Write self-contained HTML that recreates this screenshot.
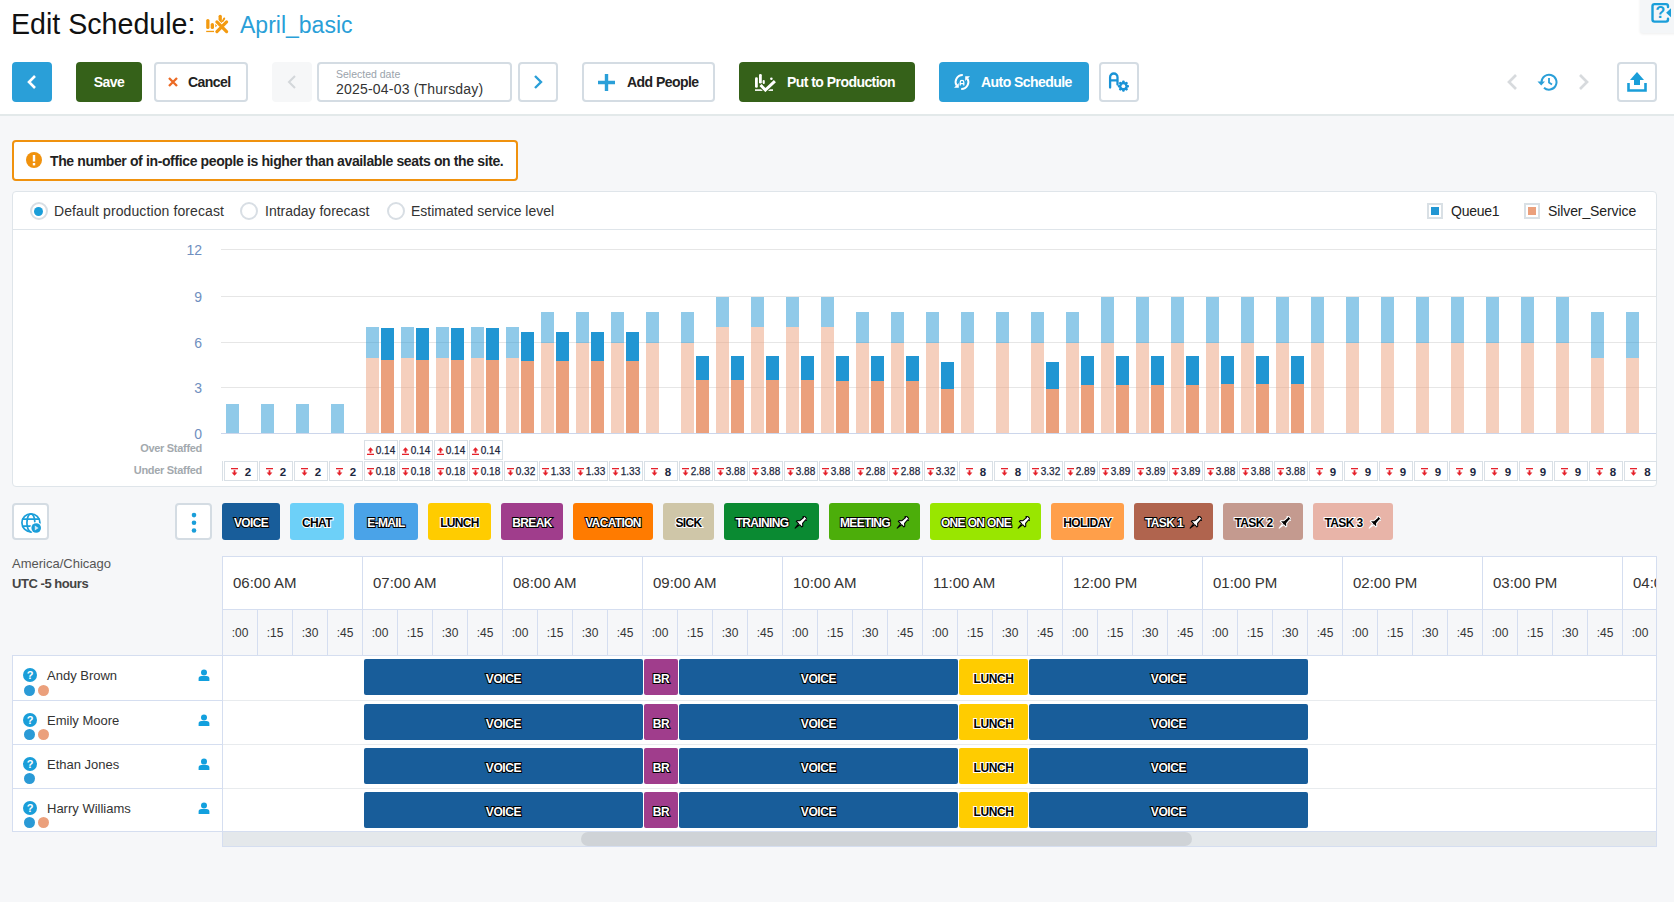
<!DOCTYPE html><html><head><meta charset="utf-8"><style>
*{box-sizing:border-box;margin:0;padding:0}
html,body{width:1674px;height:902px;overflow:hidden}
body{position:relative;background:#f6f7f9;font-family:"Liberation Sans",sans-serif;color:#222}
.abs{position:absolute}
.btn{position:absolute;border-radius:4px;display:flex;align-items:center;justify-content:center;font-weight:bold;font-size:14px;letter-spacing:-0.55px}
.obtn{background:#fff;border:2px solid #d4dce3}
.chip{position:absolute;top:503px;height:37px;border-radius:3px;display:flex;align-items:center;justify-content:center;font-weight:bold;font-size:12px;letter-spacing:-0.65px;padding-top:3px}
.w{color:#fff;-webkit-text-stroke:2px #000;paint-order:stroke fill}
.k{color:#000;-webkit-text-stroke:2px #fff;paint-order:stroke fill}
.bar{position:absolute;width:13px}
.sbox{position:absolute;width:34px;height:20px;border:1px solid #d9e0e6;background:#fff;font-size:10px;color:#1d2740;display:flex;align-items:center;justify-content:center;white-space:nowrap;padding-top:1px}
.ylab{position:absolute;right:1472px;font-size:13px;color:#6f8fc0;text-align:right}
.q{position:absolute;top:609px;height:46px;width:35px;border-right:1px solid #dde3ea;font-size:12px;color:#333;display:flex;align-items:center;justify-content:center}
.hr{position:absolute;top:557px;height:52px;width:140px;border-right:1px solid #d5def0;font-size:15px;color:#333;padding-left:11px;display:flex;align-items:center}
.row{position:absolute;left:12px;width:1644px;background:#fff}
.act{position:absolute;height:36px;border-radius:2px;display:flex;align-items:center;justify-content:center;font-weight:bold;font-size:12px;letter-spacing:-0.4px;padding-top:3px}
</style></head><body>

<div class="abs" style="left:0;top:0;width:1674px;height:114px;background:#fff"></div>
<div class="abs" style="left:0;top:114px;width:1674px;height:2px;background:#e3e9ea"></div>
<div class="abs" style="left:11px;top:5.5px;font-size:28.6px;line-height:36px;color:#111;white-space:nowrap">Edit Schedule:</div>
<svg class="abs" style="left:205px;top:14px" width="25" height="20" viewBox="0 0 25 20">
<g fill="#f39a10"><rect x="1.2" y="5" width="3.3" height="10" rx="1.6"/><rect x="5.7" y="9" width="3.3" height="6" rx="1.6"/><rect x="1.2" y="16.8" width="7.8" height="1.3"/><path d="M10.3 9.8 L12.5 11.5 L10.3 13.2Z"/></g>
<path d="M15.2 2.3 V8.5" stroke="#f39a10" stroke-width="3.3" stroke-linecap="round"/><path d="M19.2 4.5 L17.8 7.2" stroke="#f39a10" stroke-width="2" stroke-linecap="round"/>
<path d="M11.9 7.9 L21.6 17.6 M21.6 7.9 L11.9 17.6" stroke="#fff" stroke-width="5" stroke-linecap="round"/>
<path d="M11.9 7.9 L21.6 17.6 M21.6 7.9 L11.9 17.6" stroke="#f39a10" stroke-width="3.2" stroke-linecap="round"/></svg>
<div class="abs" style="left:240px;top:10px;font-size:23px;line-height:30px;color:#2a9fd8;white-space:nowrap">April_basic</div>
<div class="btn" style="left:12px;top:62px;width:40px;height:40px;background:#2a9fd8"><svg width="12" height="16" viewBox="0 0 12 16"><path d="M9 2 L3 8 L9 14" stroke="#fff" stroke-width="2.6" fill="none"/></svg></div>
<div class="btn" style="left:76px;top:62px;width:66px;height:40px;background:#356119;color:#fff">Save</div>
<div class="btn obtn" style="left:154px;top:62px;width:94px;height:40px;color:#222;justify-content:flex-start;padding-left:12px"><svg width="10" height="10" viewBox="0 0 10 10" style="margin-right:10px"><path d="M1 1 L9 9 M9 1 L1 9" stroke="#ec6a24" stroke-width="2.3"/></svg>Cancel</div>
<div class="btn" style="left:272px;top:62px;width:40px;height:40px;background:#f6f7f8"><svg width="12" height="16" viewBox="0 0 12 16"><path d="M9 2 L3 8 L9 14" stroke="#d3d7da" stroke-width="2" fill="none"/></svg></div>
<div class="btn obtn" style="left:317px;top:62px;width:195px;height:40px;display:block;padding-left:17px;letter-spacing:0"><div style="font-size:10.5px;color:#9aa3ab;font-weight:normal;line-height:12px;margin-top:4px">Selected date</div><div style="font-size:14px;color:#333;font-weight:normal;line-height:16px;margin-top:1px;letter-spacing:0.2px">2025-04-03 (Thursday)</div></div>
<div class="btn obtn" style="left:518px;top:62px;width:40px;height:40px"><svg width="12" height="16" viewBox="0 0 12 16"><path d="M3 2 L9 8 L3 14" stroke="#2a9fd8" stroke-width="2.4" fill="none"/></svg></div>
<div class="btn obtn" style="left:582px;top:62px;width:133px;height:40px;color:#222;justify-content:flex-start;padding-left:14px"><svg width="17" height="17" viewBox="0 0 17 17" style="margin-right:12px"><path d="M8.5 0 V17 M0 8.5 H17" stroke="#2a9fd8" stroke-width="3.4"/></svg>Add People</div>
<div class="btn" style="left:739px;top:62px;width:176px;height:40px;background:#356119;color:#fff;justify-content:flex-start;padding-left:15px"><svg width="22" height="19" viewBox="0 0 22 19" style="margin-right:11px;margin-top:1px">
<g fill="#fff"><rect x="1" y="4.2" width="2.8" height="10.5" rx="1.3"/><rect x="5" y="1" width="2.8" height="9.5" rx="1.3"/><rect x="8.6" y="7" width="2.2" height="4" rx="1"/><circle cx="17.4" cy="5.8" r="1.3"/><rect x="1" y="16.3" width="18" height="1.6"/></g>
<path d="M6.5 12 L11.4 17 L20.9 8.1" stroke="#356119" stroke-width="5" fill="none"/><path d="M6.5 12 L11.4 17 L20.9 8.1" stroke="#fff" stroke-width="3" fill="none"/></svg>Put to Production</div>
<div class="btn" style="left:939px;top:62px;width:150px;height:40px;background:#2a9fd8;color:#fff;justify-content:flex-start;padding-left:14px"><svg width="18" height="18" viewBox="0 0 18 18" style="margin-right:10px">
<path d="M9.8 2 A7 7 0 0 0 3.6 12.6" stroke="#fff" stroke-width="1.9" fill="none"/><path d="M8.2 16 A7 7 0 0 0 14.4 5.4" stroke="#fff" stroke-width="1.9" fill="none"/>
<path d="M5.8 14.8 L1 14.8 L5.8 10 Z M12.2 3.2 L17 3.2 L12.2 8 Z" fill="#fff"/><path d="M7.2 12.5 V9.2 A1.8 1.8 0 0 1 10.8 9.2 V12.5 M7.2 10.6 H10.8" stroke="#fff" stroke-width="1.3" fill="none"/></svg>Auto Schedule</div>
<div class="btn obtn" style="left:1099px;top:62px;width:40px;height:40px"><svg width="22" height="22" viewBox="0 0 22 22">
<path d="M2.1 16.6 V6.2 A3.7 3.7 0 0 1 9.5 6.2 V13.5 M2.1 9.3 H9.5" stroke="#1a93d6" stroke-width="2.3" fill="none" stroke-linecap="round"/>
<g fill="#1a93d6"><rect x="14.1" y="9.6" width="2.6" height="11.2" rx="1" transform="rotate(0 15.4 15.2)"/><rect x="14.1" y="9.6" width="2.6" height="11.2" rx="1" transform="rotate(45 15.4 15.2)"/><rect x="14.1" y="9.6" width="2.6" height="11.2" rx="1" transform="rotate(90 15.4 15.2)"/><rect x="14.1" y="9.6" width="2.6" height="11.2" rx="1" transform="rotate(135 15.4 15.2)"/><circle cx="15.4" cy="15.2" r="4.3"/></g><circle cx="15.4" cy="15.2" r="1.9" fill="#fff"/></svg></div>
<svg class="abs" style="left:1505px;top:72px" width="14" height="20" viewBox="0 0 14 20"><path d="M11 3 L4 10 L11 17" stroke="#d7dadd" stroke-width="2.7" fill="none"/></svg>
<svg class="abs" style="left:1536px;top:71px" width="22" height="22" viewBox="0 0 22 22"><path d="M5.5 11 A7.5 7.5 0 1 1 8 16.8" stroke="#2a9fd8" stroke-width="2" fill="none"/>
<path d="M1.5 10.5 H9 L5.2 14.5 Z" fill="#2a9fd8"/><path d="M13 7 V11.5 L16 13.5" stroke="#2a9fd8" stroke-width="1.8" fill="none"/></svg>
<svg class="abs" style="left:1577px;top:72px" width="14" height="20" viewBox="0 0 14 20"><path d="M3 3 L10 10 L3 17" stroke="#d7dadd" stroke-width="2.7" fill="none"/></svg>
<div class="btn obtn" style="left:1617px;top:62px;width:40px;height:40px"><svg width="22" height="22" viewBox="0 0 22 22">
<path d="M11 1 L18 9 H14 V14 H8 V9 H4 Z" fill="#1a9ed9"/><path d="M2.5 12 V19.5 H19.5 V12" stroke="#1a9ed9" stroke-width="2.6" fill="none"/></svg></div>
<div class="abs" style="left:1640px;top:-4px;width:40px;height:37px;background:#f4f6f8;border-radius:0 0 0 3px;box-shadow:0 1px 3px rgba(0,0,0,0.07)"></div>
<svg class="abs" style="left:1650px;top:0px" width="24" height="24" viewBox="0 0 24 24"><path d="M18 7 V6.1 Q18 4.1 16 4.1 H4.5 Q2.5 4.1 2.5 6.1 V19.6 Q2.5 21.6 4.5 21.6 H16 Q18 21.6 18 19.6 V18.6" stroke="#1a9ed9" stroke-width="2.4" fill="none" stroke-linecap="round"/>
<path d="M16.1 12.75 L21 8.2 V17.3 Z" fill="#1a9ed9"/><text x="10.4" y="18.2" font-size="16" font-weight="bold" fill="#1a9ed9" text-anchor="middle" font-family="Liberation Sans">?</text></svg>
<div class="abs" style="left:12px;top:140px;width:506px;height:41px;background:#fff;border:2px solid #f0920e;border-radius:4px"></div>
<svg class="abs" style="left:26px;top:152px" width="16" height="16" viewBox="0 0 16 16"><circle cx="8" cy="8" r="8" fill="#f0920e"/><rect x="6.8" y="3" width="2.4" height="6.5" fill="#fff"/><rect x="6.8" y="11" width="2.4" height="2.4" fill="#fff"/></svg>
<div class="abs" style="left:50px;top:152px;font-size:14px;line-height:18px;font-weight:bold;color:#222;white-space:nowrap;letter-spacing:-0.37px">The number of in-office people is higher than available seats on the site.</div>
<div class="abs" style="left:12px;top:191px;width:1645px;height:296px;background:#fff;border:1px solid #dfe5ea;border-radius:4px"></div>
<div class="abs" style="left:12px;top:229px;width:1645px;height:1px;background:#dfe5ea"></div>
<div class="abs" style="left:29.5px;top:202px;width:18px;height:18px;border-radius:50%;border:2px solid #d8dee4;background:#fff"></div><div class="abs" style="left:34.0px;top:206.5px;width:9px;height:9px;border-radius:50%;background:#1a9ed9"></div>
<div class="abs" style="left:240px;top:202px;width:18px;height:18px;border-radius:50%;border:2px solid #d8dee4;background:#fff"></div>
<div class="abs" style="left:387px;top:202px;width:18px;height:18px;border-radius:50%;border:2px solid #d8dee4;background:#fff"></div>
<div class="abs" style="left:54px;top:203px;font-size:14px;line-height:17px;color:#333;white-space:nowrap;letter-spacing:0.1px">Default production forecast</div>
<div class="abs" style="left:265px;top:203px;font-size:14px;line-height:17px;color:#333;white-space:nowrap">Intraday forecast</div>
<div class="abs" style="left:411px;top:203px;font-size:14px;line-height:17px;color:#333;white-space:nowrap">Estimated service level</div>
<div class="abs" style="left:1427px;top:203px;width:16px;height:16px;border:2px solid #d9e0e5;background:#fff"></div><div class="abs" style="left:1431px;top:207px;width:8px;height:8px;background:#2196d3"></div>
<div class="abs" style="left:1524px;top:203px;width:16px;height:16px;border:2px solid #d9e0e5;background:#fff"></div><div class="abs" style="left:1528px;top:207px;width:8px;height:8px;background:#eba07c"></div>
<div class="abs" style="left:1451px;top:203px;font-size:14px;line-height:17px;color:#222;white-space:nowrap;letter-spacing:-0.25px">Queue1</div>
<div class="abs" style="left:1548px;top:203px;font-size:14px;line-height:17px;color:#222;white-space:nowrap;letter-spacing:-0.1px">Silver_Service</div>
<div class="abs" style="left:221px;top:387px;width:1435px;height:1px;background:#e6e6e6"></div>
<div class="abs" style="left:221px;top:342px;width:1435px;height:1px;background:#e6e6e6"></div>
<div class="abs" style="left:221px;top:296px;width:1435px;height:1px;background:#e6e6e6"></div>
<div class="abs" style="left:221px;top:249px;width:1435px;height:1px;background:#e6e6e6"></div>
<div class="abs" style="left:150px;top:425px;width:52px;text-align:right;font-size:14px;line-height:18px;color:#6f8fc0">0</div>
<div class="abs" style="left:150px;top:379px;width:52px;text-align:right;font-size:14px;line-height:18px;color:#6f8fc0">3</div>
<div class="abs" style="left:150px;top:334px;width:52px;text-align:right;font-size:14px;line-height:18px;color:#6f8fc0">6</div>
<div class="abs" style="left:150px;top:288px;width:52px;text-align:right;font-size:14px;line-height:18px;color:#6f8fc0">9</div>
<div class="abs" style="left:150px;top:241px;width:52px;text-align:right;font-size:14px;line-height:18px;color:#6f8fc0">12</div>
<div class="bar" style="left:226px;top:404px;height:30px;background:rgba(33,150,211,0.5)"></div>
<div class="bar" style="left:261px;top:404px;height:30px;background:rgba(33,150,211,0.5)"></div>
<div class="bar" style="left:296px;top:404px;height:30px;background:rgba(33,150,211,0.5)"></div>
<div class="bar" style="left:331px;top:404px;height:30px;background:rgba(33,150,211,0.5)"></div>
<div class="bar" style="left:366px;top:358px;height:76px;background:rgba(235,160,124,0.5)"></div><div class="bar" style="left:366px;top:327px;height:31px;background:rgba(33,150,211,0.5)"></div>
<div class="bar" style="left:381px;top:360px;height:74px;background:#eba07c"></div><div class="bar" style="left:381px;top:328px;height:32px;background:#2196d3"></div>
<div class="bar" style="left:401px;top:358px;height:76px;background:rgba(235,160,124,0.5)"></div><div class="bar" style="left:401px;top:327px;height:31px;background:rgba(33,150,211,0.5)"></div>
<div class="bar" style="left:416px;top:360px;height:74px;background:#eba07c"></div><div class="bar" style="left:416px;top:328px;height:32px;background:#2196d3"></div>
<div class="bar" style="left:436px;top:358px;height:76px;background:rgba(235,160,124,0.5)"></div><div class="bar" style="left:436px;top:327px;height:31px;background:rgba(33,150,211,0.5)"></div>
<div class="bar" style="left:451px;top:360px;height:74px;background:#eba07c"></div><div class="bar" style="left:451px;top:328px;height:32px;background:#2196d3"></div>
<div class="bar" style="left:471px;top:358px;height:76px;background:rgba(235,160,124,0.5)"></div><div class="bar" style="left:471px;top:327px;height:31px;background:rgba(33,150,211,0.5)"></div>
<div class="bar" style="left:486px;top:360px;height:74px;background:#eba07c"></div><div class="bar" style="left:486px;top:328px;height:32px;background:#2196d3"></div>
<div class="bar" style="left:506px;top:358px;height:76px;background:rgba(235,160,124,0.5)"></div><div class="bar" style="left:506px;top:327px;height:31px;background:rgba(33,150,211,0.5)"></div>
<div class="bar" style="left:521px;top:361px;height:73px;background:#eba07c"></div><div class="bar" style="left:521px;top:332px;height:29px;background:#2196d3"></div>
<div class="bar" style="left:541px;top:343px;height:91px;background:rgba(235,160,124,0.5)"></div><div class="bar" style="left:541px;top:312px;height:31px;background:rgba(33,150,211,0.5)"></div>
<div class="bar" style="left:556px;top:361px;height:73px;background:#eba07c"></div><div class="bar" style="left:556px;top:332px;height:29px;background:#2196d3"></div>
<div class="bar" style="left:576px;top:343px;height:91px;background:rgba(235,160,124,0.5)"></div><div class="bar" style="left:576px;top:312px;height:31px;background:rgba(33,150,211,0.5)"></div>
<div class="bar" style="left:591px;top:361px;height:73px;background:#eba07c"></div><div class="bar" style="left:591px;top:332px;height:29px;background:#2196d3"></div>
<div class="bar" style="left:611px;top:343px;height:91px;background:rgba(235,160,124,0.5)"></div><div class="bar" style="left:611px;top:312px;height:31px;background:rgba(33,150,211,0.5)"></div>
<div class="bar" style="left:626px;top:361px;height:73px;background:#eba07c"></div><div class="bar" style="left:626px;top:332px;height:29px;background:#2196d3"></div>
<div class="bar" style="left:646px;top:343px;height:91px;background:rgba(235,160,124,0.5)"></div><div class="bar" style="left:646px;top:312px;height:31px;background:rgba(33,150,211,0.5)"></div>
<div class="bar" style="left:681px;top:343px;height:91px;background:rgba(235,160,124,0.5)"></div><div class="bar" style="left:681px;top:312px;height:31px;background:rgba(33,150,211,0.5)"></div>
<div class="bar" style="left:696px;top:380px;height:54px;background:#eba07c"></div><div class="bar" style="left:696px;top:356px;height:24px;background:#2196d3"></div>
<div class="bar" style="left:716px;top:327px;height:107px;background:rgba(235,160,124,0.5)"></div><div class="bar" style="left:716px;top:297px;height:30px;background:rgba(33,150,211,0.5)"></div>
<div class="bar" style="left:731px;top:380px;height:54px;background:#eba07c"></div><div class="bar" style="left:731px;top:356px;height:24px;background:#2196d3"></div>
<div class="bar" style="left:751px;top:327px;height:107px;background:rgba(235,160,124,0.5)"></div><div class="bar" style="left:751px;top:297px;height:30px;background:rgba(33,150,211,0.5)"></div>
<div class="bar" style="left:766px;top:380px;height:54px;background:#eba07c"></div><div class="bar" style="left:766px;top:356px;height:24px;background:#2196d3"></div>
<div class="bar" style="left:786px;top:327px;height:107px;background:rgba(235,160,124,0.5)"></div><div class="bar" style="left:786px;top:297px;height:30px;background:rgba(33,150,211,0.5)"></div>
<div class="bar" style="left:801px;top:380px;height:54px;background:#eba07c"></div><div class="bar" style="left:801px;top:356px;height:24px;background:#2196d3"></div>
<div class="bar" style="left:821px;top:327px;height:107px;background:rgba(235,160,124,0.5)"></div><div class="bar" style="left:821px;top:297px;height:30px;background:rgba(33,150,211,0.5)"></div>
<div class="bar" style="left:836px;top:381px;height:53px;background:#eba07c"></div><div class="bar" style="left:836px;top:356px;height:25px;background:#2196d3"></div>
<div class="bar" style="left:856px;top:343px;height:91px;background:rgba(235,160,124,0.5)"></div><div class="bar" style="left:856px;top:312px;height:31px;background:rgba(33,150,211,0.5)"></div>
<div class="bar" style="left:871px;top:381px;height:53px;background:#eba07c"></div><div class="bar" style="left:871px;top:356px;height:25px;background:#2196d3"></div>
<div class="bar" style="left:891px;top:343px;height:91px;background:rgba(235,160,124,0.5)"></div><div class="bar" style="left:891px;top:312px;height:31px;background:rgba(33,150,211,0.5)"></div>
<div class="bar" style="left:906px;top:381px;height:53px;background:#eba07c"></div><div class="bar" style="left:906px;top:356px;height:25px;background:#2196d3"></div>
<div class="bar" style="left:926px;top:343px;height:91px;background:rgba(235,160,124,0.5)"></div><div class="bar" style="left:926px;top:312px;height:31px;background:rgba(33,150,211,0.5)"></div>
<div class="bar" style="left:941px;top:389px;height:45px;background:#eba07c"></div><div class="bar" style="left:941px;top:362px;height:27px;background:#2196d3"></div>
<div class="bar" style="left:961px;top:343px;height:91px;background:rgba(235,160,124,0.5)"></div><div class="bar" style="left:961px;top:312px;height:31px;background:rgba(33,150,211,0.5)"></div>
<div class="bar" style="left:996px;top:343px;height:91px;background:rgba(235,160,124,0.5)"></div><div class="bar" style="left:996px;top:312px;height:31px;background:rgba(33,150,211,0.5)"></div>
<div class="bar" style="left:1031px;top:343px;height:91px;background:rgba(235,160,124,0.5)"></div><div class="bar" style="left:1031px;top:312px;height:31px;background:rgba(33,150,211,0.5)"></div>
<div class="bar" style="left:1046px;top:389px;height:45px;background:#eba07c"></div><div class="bar" style="left:1046px;top:362px;height:27px;background:#2196d3"></div>
<div class="bar" style="left:1066px;top:343px;height:91px;background:rgba(235,160,124,0.5)"></div><div class="bar" style="left:1066px;top:312px;height:31px;background:rgba(33,150,211,0.5)"></div>
<div class="bar" style="left:1081px;top:385px;height:49px;background:#eba07c"></div><div class="bar" style="left:1081px;top:356px;height:29px;background:#2196d3"></div>
<div class="bar" style="left:1101px;top:343px;height:91px;background:rgba(235,160,124,0.5)"></div><div class="bar" style="left:1101px;top:297px;height:46px;background:rgba(33,150,211,0.5)"></div>
<div class="bar" style="left:1116px;top:385px;height:49px;background:#eba07c"></div><div class="bar" style="left:1116px;top:356px;height:29px;background:#2196d3"></div>
<div class="bar" style="left:1136px;top:343px;height:91px;background:rgba(235,160,124,0.5)"></div><div class="bar" style="left:1136px;top:297px;height:46px;background:rgba(33,150,211,0.5)"></div>
<div class="bar" style="left:1151px;top:385px;height:49px;background:#eba07c"></div><div class="bar" style="left:1151px;top:356px;height:29px;background:#2196d3"></div>
<div class="bar" style="left:1171px;top:343px;height:91px;background:rgba(235,160,124,0.5)"></div><div class="bar" style="left:1171px;top:297px;height:46px;background:rgba(33,150,211,0.5)"></div>
<div class="bar" style="left:1186px;top:385px;height:49px;background:#eba07c"></div><div class="bar" style="left:1186px;top:356px;height:29px;background:#2196d3"></div>
<div class="bar" style="left:1206px;top:343px;height:91px;background:rgba(235,160,124,0.5)"></div><div class="bar" style="left:1206px;top:297px;height:46px;background:rgba(33,150,211,0.5)"></div>
<div class="bar" style="left:1221px;top:384px;height:50px;background:#eba07c"></div><div class="bar" style="left:1221px;top:356px;height:28px;background:#2196d3"></div>
<div class="bar" style="left:1241px;top:343px;height:91px;background:rgba(235,160,124,0.5)"></div><div class="bar" style="left:1241px;top:297px;height:46px;background:rgba(33,150,211,0.5)"></div>
<div class="bar" style="left:1256px;top:384px;height:50px;background:#eba07c"></div><div class="bar" style="left:1256px;top:356px;height:28px;background:#2196d3"></div>
<div class="bar" style="left:1276px;top:343px;height:91px;background:rgba(235,160,124,0.5)"></div><div class="bar" style="left:1276px;top:297px;height:46px;background:rgba(33,150,211,0.5)"></div>
<div class="bar" style="left:1291px;top:384px;height:50px;background:#eba07c"></div><div class="bar" style="left:1291px;top:356px;height:28px;background:#2196d3"></div>
<div class="bar" style="left:1311px;top:343px;height:91px;background:rgba(235,160,124,0.5)"></div><div class="bar" style="left:1311px;top:297px;height:46px;background:rgba(33,150,211,0.5)"></div>
<div class="bar" style="left:1346px;top:343px;height:91px;background:rgba(235,160,124,0.5)"></div><div class="bar" style="left:1346px;top:297px;height:46px;background:rgba(33,150,211,0.5)"></div>
<div class="bar" style="left:1381px;top:343px;height:91px;background:rgba(235,160,124,0.5)"></div><div class="bar" style="left:1381px;top:297px;height:46px;background:rgba(33,150,211,0.5)"></div>
<div class="bar" style="left:1416px;top:343px;height:91px;background:rgba(235,160,124,0.5)"></div><div class="bar" style="left:1416px;top:297px;height:46px;background:rgba(33,150,211,0.5)"></div>
<div class="bar" style="left:1451px;top:343px;height:91px;background:rgba(235,160,124,0.5)"></div><div class="bar" style="left:1451px;top:297px;height:46px;background:rgba(33,150,211,0.5)"></div>
<div class="bar" style="left:1486px;top:343px;height:91px;background:rgba(235,160,124,0.5)"></div><div class="bar" style="left:1486px;top:297px;height:46px;background:rgba(33,150,211,0.5)"></div>
<div class="bar" style="left:1521px;top:343px;height:91px;background:rgba(235,160,124,0.5)"></div><div class="bar" style="left:1521px;top:297px;height:46px;background:rgba(33,150,211,0.5)"></div>
<div class="bar" style="left:1556px;top:343px;height:91px;background:rgba(235,160,124,0.5)"></div><div class="bar" style="left:1556px;top:297px;height:46px;background:rgba(33,150,211,0.5)"></div>
<div class="bar" style="left:1591px;top:358px;height:76px;background:rgba(235,160,124,0.5)"></div><div class="bar" style="left:1591px;top:312px;height:46px;background:rgba(33,150,211,0.5)"></div>
<div class="bar" style="left:1626px;top:358px;height:76px;background:rgba(235,160,124,0.5)"></div><div class="bar" style="left:1626px;top:312px;height:46px;background:rgba(33,150,211,0.5)"></div>
<div class="abs" style="left:221px;top:433px;width:1435px;height:1px;background:#ccd6eb"></div>
<div class="abs" style="left:100px;top:441px;width:102px;text-align:right;font-size:11px;line-height:14px;color:#a3a9ae;font-weight:bold;letter-spacing:-0.3px">Over Staffed</div>
<div class="abs" style="left:100px;top:463px;width:102px;text-align:right;font-size:11px;line-height:14px;color:#a3a9ae;font-weight:bold;letter-spacing:-0.3px">Under Staffed</div>
<div class="abs" style="left:222px;top:461px;width:1px;height:20px;background:#d9e0e6"></div>
<div class="sbox" style="left:224px;top:461px;"><svg width="7" height="8" viewBox="0 0 7 8"><rect x="0" y="0" width="7" height="1.3" fill="#e5222b"/><rect x="2.6" y="2.2" width="1.8" height="3" fill="#e5222b"/><path d="M0.6 4.4 L3.5 7.8 L6.4 4.4 Z" fill="#e5222b"/></svg><span style="margin-left:7px;font-size:11.5px;font-weight:bold;color:#1d2740">2</span></div>
<div class="sbox" style="left:259px;top:461px;"><svg width="7" height="8" viewBox="0 0 7 8"><rect x="0" y="0" width="7" height="1.3" fill="#e5222b"/><rect x="2.6" y="2.2" width="1.8" height="3" fill="#e5222b"/><path d="M0.6 4.4 L3.5 7.8 L6.4 4.4 Z" fill="#e5222b"/></svg><span style="margin-left:7px;font-size:11.5px;font-weight:bold;color:#1d2740">2</span></div>
<div class="sbox" style="left:294px;top:461px;"><svg width="7" height="8" viewBox="0 0 7 8"><rect x="0" y="0" width="7" height="1.3" fill="#e5222b"/><rect x="2.6" y="2.2" width="1.8" height="3" fill="#e5222b"/><path d="M0.6 4.4 L3.5 7.8 L6.4 4.4 Z" fill="#e5222b"/></svg><span style="margin-left:7px;font-size:11.5px;font-weight:bold;color:#1d2740">2</span></div>
<div class="sbox" style="left:329px;top:461px;"><svg width="7" height="8" viewBox="0 0 7 8"><rect x="0" y="0" width="7" height="1.3" fill="#e5222b"/><rect x="2.6" y="2.2" width="1.8" height="3" fill="#e5222b"/><path d="M0.6 4.4 L3.5 7.8 L6.4 4.4 Z" fill="#e5222b"/></svg><span style="margin-left:7px;font-size:11.5px;font-weight:bold;color:#1d2740">2</span></div>
<div class="sbox" style="left:364px;top:461px;"><svg width="7" height="8" viewBox="0 0 7 8"><rect x="0" y="0" width="7" height="1.3" fill="#e5222b"/><rect x="2.6" y="2.2" width="1.8" height="3" fill="#e5222b"/><path d="M0.6 4.4 L3.5 7.8 L6.4 4.4 Z" fill="#e5222b"/></svg><span style="margin-left:2px;-webkit-text-stroke:0.25px #1d2740">0.18</span></div>
<div class="sbox" style="left:399px;top:461px;"><svg width="7" height="8" viewBox="0 0 7 8"><rect x="0" y="0" width="7" height="1.3" fill="#e5222b"/><rect x="2.6" y="2.2" width="1.8" height="3" fill="#e5222b"/><path d="M0.6 4.4 L3.5 7.8 L6.4 4.4 Z" fill="#e5222b"/></svg><span style="margin-left:2px;-webkit-text-stroke:0.25px #1d2740">0.18</span></div>
<div class="sbox" style="left:434px;top:461px;"><svg width="7" height="8" viewBox="0 0 7 8"><rect x="0" y="0" width="7" height="1.3" fill="#e5222b"/><rect x="2.6" y="2.2" width="1.8" height="3" fill="#e5222b"/><path d="M0.6 4.4 L3.5 7.8 L6.4 4.4 Z" fill="#e5222b"/></svg><span style="margin-left:2px;-webkit-text-stroke:0.25px #1d2740">0.18</span></div>
<div class="sbox" style="left:469px;top:461px;"><svg width="7" height="8" viewBox="0 0 7 8"><rect x="0" y="0" width="7" height="1.3" fill="#e5222b"/><rect x="2.6" y="2.2" width="1.8" height="3" fill="#e5222b"/><path d="M0.6 4.4 L3.5 7.8 L6.4 4.4 Z" fill="#e5222b"/></svg><span style="margin-left:2px;-webkit-text-stroke:0.25px #1d2740">0.18</span></div>
<div class="sbox" style="left:504px;top:461px;"><svg width="7" height="8" viewBox="0 0 7 8"><rect x="0" y="0" width="7" height="1.3" fill="#e5222b"/><rect x="2.6" y="2.2" width="1.8" height="3" fill="#e5222b"/><path d="M0.6 4.4 L3.5 7.8 L6.4 4.4 Z" fill="#e5222b"/></svg><span style="margin-left:2px;-webkit-text-stroke:0.25px #1d2740">0.32</span></div>
<div class="sbox" style="left:539px;top:461px;"><svg width="7" height="8" viewBox="0 0 7 8"><rect x="0" y="0" width="7" height="1.3" fill="#e5222b"/><rect x="2.6" y="2.2" width="1.8" height="3" fill="#e5222b"/><path d="M0.6 4.4 L3.5 7.8 L6.4 4.4 Z" fill="#e5222b"/></svg><span style="margin-left:2px;-webkit-text-stroke:0.25px #1d2740">1.33</span></div>
<div class="sbox" style="left:574px;top:461px;"><svg width="7" height="8" viewBox="0 0 7 8"><rect x="0" y="0" width="7" height="1.3" fill="#e5222b"/><rect x="2.6" y="2.2" width="1.8" height="3" fill="#e5222b"/><path d="M0.6 4.4 L3.5 7.8 L6.4 4.4 Z" fill="#e5222b"/></svg><span style="margin-left:2px;-webkit-text-stroke:0.25px #1d2740">1.33</span></div>
<div class="sbox" style="left:609px;top:461px;"><svg width="7" height="8" viewBox="0 0 7 8"><rect x="0" y="0" width="7" height="1.3" fill="#e5222b"/><rect x="2.6" y="2.2" width="1.8" height="3" fill="#e5222b"/><path d="M0.6 4.4 L3.5 7.8 L6.4 4.4 Z" fill="#e5222b"/></svg><span style="margin-left:2px;-webkit-text-stroke:0.25px #1d2740">1.33</span></div>
<div class="sbox" style="left:644px;top:461px;"><svg width="7" height="8" viewBox="0 0 7 8"><rect x="0" y="0" width="7" height="1.3" fill="#e5222b"/><rect x="2.6" y="2.2" width="1.8" height="3" fill="#e5222b"/><path d="M0.6 4.4 L3.5 7.8 L6.4 4.4 Z" fill="#e5222b"/></svg><span style="margin-left:7px;font-size:11.5px;font-weight:bold;color:#1d2740">8</span></div>
<div class="sbox" style="left:679px;top:461px;"><svg width="7" height="8" viewBox="0 0 7 8"><rect x="0" y="0" width="7" height="1.3" fill="#e5222b"/><rect x="2.6" y="2.2" width="1.8" height="3" fill="#e5222b"/><path d="M0.6 4.4 L3.5 7.8 L6.4 4.4 Z" fill="#e5222b"/></svg><span style="margin-left:2px;-webkit-text-stroke:0.25px #1d2740">2.88</span></div>
<div class="sbox" style="left:714px;top:461px;"><svg width="7" height="8" viewBox="0 0 7 8"><rect x="0" y="0" width="7" height="1.3" fill="#e5222b"/><rect x="2.6" y="2.2" width="1.8" height="3" fill="#e5222b"/><path d="M0.6 4.4 L3.5 7.8 L6.4 4.4 Z" fill="#e5222b"/></svg><span style="margin-left:2px;-webkit-text-stroke:0.25px #1d2740">3.88</span></div>
<div class="sbox" style="left:749px;top:461px;"><svg width="7" height="8" viewBox="0 0 7 8"><rect x="0" y="0" width="7" height="1.3" fill="#e5222b"/><rect x="2.6" y="2.2" width="1.8" height="3" fill="#e5222b"/><path d="M0.6 4.4 L3.5 7.8 L6.4 4.4 Z" fill="#e5222b"/></svg><span style="margin-left:2px;-webkit-text-stroke:0.25px #1d2740">3.88</span></div>
<div class="sbox" style="left:784px;top:461px;"><svg width="7" height="8" viewBox="0 0 7 8"><rect x="0" y="0" width="7" height="1.3" fill="#e5222b"/><rect x="2.6" y="2.2" width="1.8" height="3" fill="#e5222b"/><path d="M0.6 4.4 L3.5 7.8 L6.4 4.4 Z" fill="#e5222b"/></svg><span style="margin-left:2px;-webkit-text-stroke:0.25px #1d2740">3.88</span></div>
<div class="sbox" style="left:819px;top:461px;"><svg width="7" height="8" viewBox="0 0 7 8"><rect x="0" y="0" width="7" height="1.3" fill="#e5222b"/><rect x="2.6" y="2.2" width="1.8" height="3" fill="#e5222b"/><path d="M0.6 4.4 L3.5 7.8 L6.4 4.4 Z" fill="#e5222b"/></svg><span style="margin-left:2px;-webkit-text-stroke:0.25px #1d2740">3.88</span></div>
<div class="sbox" style="left:854px;top:461px;"><svg width="7" height="8" viewBox="0 0 7 8"><rect x="0" y="0" width="7" height="1.3" fill="#e5222b"/><rect x="2.6" y="2.2" width="1.8" height="3" fill="#e5222b"/><path d="M0.6 4.4 L3.5 7.8 L6.4 4.4 Z" fill="#e5222b"/></svg><span style="margin-left:2px;-webkit-text-stroke:0.25px #1d2740">2.88</span></div>
<div class="sbox" style="left:889px;top:461px;"><svg width="7" height="8" viewBox="0 0 7 8"><rect x="0" y="0" width="7" height="1.3" fill="#e5222b"/><rect x="2.6" y="2.2" width="1.8" height="3" fill="#e5222b"/><path d="M0.6 4.4 L3.5 7.8 L6.4 4.4 Z" fill="#e5222b"/></svg><span style="margin-left:2px;-webkit-text-stroke:0.25px #1d2740">2.88</span></div>
<div class="sbox" style="left:924px;top:461px;"><svg width="7" height="8" viewBox="0 0 7 8"><rect x="0" y="0" width="7" height="1.3" fill="#e5222b"/><rect x="2.6" y="2.2" width="1.8" height="3" fill="#e5222b"/><path d="M0.6 4.4 L3.5 7.8 L6.4 4.4 Z" fill="#e5222b"/></svg><span style="margin-left:2px;-webkit-text-stroke:0.25px #1d2740">3.32</span></div>
<div class="sbox" style="left:959px;top:461px;"><svg width="7" height="8" viewBox="0 0 7 8"><rect x="0" y="0" width="7" height="1.3" fill="#e5222b"/><rect x="2.6" y="2.2" width="1.8" height="3" fill="#e5222b"/><path d="M0.6 4.4 L3.5 7.8 L6.4 4.4 Z" fill="#e5222b"/></svg><span style="margin-left:7px;font-size:11.5px;font-weight:bold;color:#1d2740">8</span></div>
<div class="sbox" style="left:994px;top:461px;"><svg width="7" height="8" viewBox="0 0 7 8"><rect x="0" y="0" width="7" height="1.3" fill="#e5222b"/><rect x="2.6" y="2.2" width="1.8" height="3" fill="#e5222b"/><path d="M0.6 4.4 L3.5 7.8 L6.4 4.4 Z" fill="#e5222b"/></svg><span style="margin-left:7px;font-size:11.5px;font-weight:bold;color:#1d2740">8</span></div>
<div class="sbox" style="left:1029px;top:461px;"><svg width="7" height="8" viewBox="0 0 7 8"><rect x="0" y="0" width="7" height="1.3" fill="#e5222b"/><rect x="2.6" y="2.2" width="1.8" height="3" fill="#e5222b"/><path d="M0.6 4.4 L3.5 7.8 L6.4 4.4 Z" fill="#e5222b"/></svg><span style="margin-left:2px;-webkit-text-stroke:0.25px #1d2740">3.32</span></div>
<div class="sbox" style="left:1064px;top:461px;"><svg width="7" height="8" viewBox="0 0 7 8"><rect x="0" y="0" width="7" height="1.3" fill="#e5222b"/><rect x="2.6" y="2.2" width="1.8" height="3" fill="#e5222b"/><path d="M0.6 4.4 L3.5 7.8 L6.4 4.4 Z" fill="#e5222b"/></svg><span style="margin-left:2px;-webkit-text-stroke:0.25px #1d2740">2.89</span></div>
<div class="sbox" style="left:1099px;top:461px;"><svg width="7" height="8" viewBox="0 0 7 8"><rect x="0" y="0" width="7" height="1.3" fill="#e5222b"/><rect x="2.6" y="2.2" width="1.8" height="3" fill="#e5222b"/><path d="M0.6 4.4 L3.5 7.8 L6.4 4.4 Z" fill="#e5222b"/></svg><span style="margin-left:2px;-webkit-text-stroke:0.25px #1d2740">3.89</span></div>
<div class="sbox" style="left:1134px;top:461px;"><svg width="7" height="8" viewBox="0 0 7 8"><rect x="0" y="0" width="7" height="1.3" fill="#e5222b"/><rect x="2.6" y="2.2" width="1.8" height="3" fill="#e5222b"/><path d="M0.6 4.4 L3.5 7.8 L6.4 4.4 Z" fill="#e5222b"/></svg><span style="margin-left:2px;-webkit-text-stroke:0.25px #1d2740">3.89</span></div>
<div class="sbox" style="left:1169px;top:461px;"><svg width="7" height="8" viewBox="0 0 7 8"><rect x="0" y="0" width="7" height="1.3" fill="#e5222b"/><rect x="2.6" y="2.2" width="1.8" height="3" fill="#e5222b"/><path d="M0.6 4.4 L3.5 7.8 L6.4 4.4 Z" fill="#e5222b"/></svg><span style="margin-left:2px;-webkit-text-stroke:0.25px #1d2740">3.89</span></div>
<div class="sbox" style="left:1204px;top:461px;"><svg width="7" height="8" viewBox="0 0 7 8"><rect x="0" y="0" width="7" height="1.3" fill="#e5222b"/><rect x="2.6" y="2.2" width="1.8" height="3" fill="#e5222b"/><path d="M0.6 4.4 L3.5 7.8 L6.4 4.4 Z" fill="#e5222b"/></svg><span style="margin-left:2px;-webkit-text-stroke:0.25px #1d2740">3.88</span></div>
<div class="sbox" style="left:1239px;top:461px;"><svg width="7" height="8" viewBox="0 0 7 8"><rect x="0" y="0" width="7" height="1.3" fill="#e5222b"/><rect x="2.6" y="2.2" width="1.8" height="3" fill="#e5222b"/><path d="M0.6 4.4 L3.5 7.8 L6.4 4.4 Z" fill="#e5222b"/></svg><span style="margin-left:2px;-webkit-text-stroke:0.25px #1d2740">3.88</span></div>
<div class="sbox" style="left:1274px;top:461px;"><svg width="7" height="8" viewBox="0 0 7 8"><rect x="0" y="0" width="7" height="1.3" fill="#e5222b"/><rect x="2.6" y="2.2" width="1.8" height="3" fill="#e5222b"/><path d="M0.6 4.4 L3.5 7.8 L6.4 4.4 Z" fill="#e5222b"/></svg><span style="margin-left:2px;-webkit-text-stroke:0.25px #1d2740">3.88</span></div>
<div class="sbox" style="left:1309px;top:461px;"><svg width="7" height="8" viewBox="0 0 7 8"><rect x="0" y="0" width="7" height="1.3" fill="#e5222b"/><rect x="2.6" y="2.2" width="1.8" height="3" fill="#e5222b"/><path d="M0.6 4.4 L3.5 7.8 L6.4 4.4 Z" fill="#e5222b"/></svg><span style="margin-left:7px;font-size:11.5px;font-weight:bold;color:#1d2740">9</span></div>
<div class="sbox" style="left:1344px;top:461px;"><svg width="7" height="8" viewBox="0 0 7 8"><rect x="0" y="0" width="7" height="1.3" fill="#e5222b"/><rect x="2.6" y="2.2" width="1.8" height="3" fill="#e5222b"/><path d="M0.6 4.4 L3.5 7.8 L6.4 4.4 Z" fill="#e5222b"/></svg><span style="margin-left:7px;font-size:11.5px;font-weight:bold;color:#1d2740">9</span></div>
<div class="sbox" style="left:1379px;top:461px;"><svg width="7" height="8" viewBox="0 0 7 8"><rect x="0" y="0" width="7" height="1.3" fill="#e5222b"/><rect x="2.6" y="2.2" width="1.8" height="3" fill="#e5222b"/><path d="M0.6 4.4 L3.5 7.8 L6.4 4.4 Z" fill="#e5222b"/></svg><span style="margin-left:7px;font-size:11.5px;font-weight:bold;color:#1d2740">9</span></div>
<div class="sbox" style="left:1414px;top:461px;"><svg width="7" height="8" viewBox="0 0 7 8"><rect x="0" y="0" width="7" height="1.3" fill="#e5222b"/><rect x="2.6" y="2.2" width="1.8" height="3" fill="#e5222b"/><path d="M0.6 4.4 L3.5 7.8 L6.4 4.4 Z" fill="#e5222b"/></svg><span style="margin-left:7px;font-size:11.5px;font-weight:bold;color:#1d2740">9</span></div>
<div class="sbox" style="left:1449px;top:461px;"><svg width="7" height="8" viewBox="0 0 7 8"><rect x="0" y="0" width="7" height="1.3" fill="#e5222b"/><rect x="2.6" y="2.2" width="1.8" height="3" fill="#e5222b"/><path d="M0.6 4.4 L3.5 7.8 L6.4 4.4 Z" fill="#e5222b"/></svg><span style="margin-left:7px;font-size:11.5px;font-weight:bold;color:#1d2740">9</span></div>
<div class="sbox" style="left:1484px;top:461px;"><svg width="7" height="8" viewBox="0 0 7 8"><rect x="0" y="0" width="7" height="1.3" fill="#e5222b"/><rect x="2.6" y="2.2" width="1.8" height="3" fill="#e5222b"/><path d="M0.6 4.4 L3.5 7.8 L6.4 4.4 Z" fill="#e5222b"/></svg><span style="margin-left:7px;font-size:11.5px;font-weight:bold;color:#1d2740">9</span></div>
<div class="sbox" style="left:1519px;top:461px;"><svg width="7" height="8" viewBox="0 0 7 8"><rect x="0" y="0" width="7" height="1.3" fill="#e5222b"/><rect x="2.6" y="2.2" width="1.8" height="3" fill="#e5222b"/><path d="M0.6 4.4 L3.5 7.8 L6.4 4.4 Z" fill="#e5222b"/></svg><span style="margin-left:7px;font-size:11.5px;font-weight:bold;color:#1d2740">9</span></div>
<div class="sbox" style="left:1554px;top:461px;"><svg width="7" height="8" viewBox="0 0 7 8"><rect x="0" y="0" width="7" height="1.3" fill="#e5222b"/><rect x="2.6" y="2.2" width="1.8" height="3" fill="#e5222b"/><path d="M0.6 4.4 L3.5 7.8 L6.4 4.4 Z" fill="#e5222b"/></svg><span style="margin-left:7px;font-size:11.5px;font-weight:bold;color:#1d2740">9</span></div>
<div class="sbox" style="left:1589px;top:461px;"><svg width="7" height="8" viewBox="0 0 7 8"><rect x="0" y="0" width="7" height="1.3" fill="#e5222b"/><rect x="2.6" y="2.2" width="1.8" height="3" fill="#e5222b"/><path d="M0.6 4.4 L3.5 7.8 L6.4 4.4 Z" fill="#e5222b"/></svg><span style="margin-left:7px;font-size:11.5px;font-weight:bold;color:#1d2740">8</span></div>
<div class="sbox" style="left:1624px;top:461px;width:33px;"><svg width="7" height="8" viewBox="0 0 7 8"><rect x="0" y="0" width="7" height="1.3" fill="#e5222b"/><rect x="2.6" y="2.2" width="1.8" height="3" fill="#e5222b"/><path d="M0.6 4.4 L3.5 7.8 L6.4 4.4 Z" fill="#e5222b"/></svg><span style="margin-left:7px;font-size:11.5px;font-weight:bold;color:#1d2740">8</span></div>
<div class="sbox" style="left:364px;top:440px"><svg width="7" height="8" viewBox="0 0 7 8"><rect x="0" y="6.7" width="7" height="1.3" fill="#e5222b"/><rect x="2.6" y="2.8" width="1.8" height="3" fill="#e5222b"/><path d="M0.6 3.6 L3.5 0.2 L6.4 3.6 Z" fill="#e5222b"/></svg><span style="margin-left:2px;-webkit-text-stroke:0.25px #1d2740">0.14</span></div>
<div class="sbox" style="left:399px;top:440px"><svg width="7" height="8" viewBox="0 0 7 8"><rect x="0" y="6.7" width="7" height="1.3" fill="#e5222b"/><rect x="2.6" y="2.8" width="1.8" height="3" fill="#e5222b"/><path d="M0.6 3.6 L3.5 0.2 L6.4 3.6 Z" fill="#e5222b"/></svg><span style="margin-left:2px;-webkit-text-stroke:0.25px #1d2740">0.14</span></div>
<div class="sbox" style="left:434px;top:440px"><svg width="7" height="8" viewBox="0 0 7 8"><rect x="0" y="6.7" width="7" height="1.3" fill="#e5222b"/><rect x="2.6" y="2.8" width="1.8" height="3" fill="#e5222b"/><path d="M0.6 3.6 L3.5 0.2 L6.4 3.6 Z" fill="#e5222b"/></svg><span style="margin-left:2px;-webkit-text-stroke:0.25px #1d2740">0.14</span></div>
<div class="sbox" style="left:469px;top:440px"><svg width="7" height="8" viewBox="0 0 7 8"><rect x="0" y="6.7" width="7" height="1.3" fill="#e5222b"/><rect x="2.6" y="2.8" width="1.8" height="3" fill="#e5222b"/><path d="M0.6 3.6 L3.5 0.2 L6.4 3.6 Z" fill="#e5222b"/></svg><span style="margin-left:2px;-webkit-text-stroke:0.25px #1d2740">0.14</span></div>
<div class="btn obtn" style="left:12px;top:503px;width:37px;height:37px"></div>
<svg class="abs" style="left:19px;top:511px" width="24" height="24" viewBox="0 0 24 24">
<g stroke="#1a9ed9" stroke-width="1.7" fill="none"><circle cx="11.9" cy="11.8" r="9"/><ellipse cx="11.9" cy="11.8" rx="4" ry="9"/><path d="M3.2 8.2 H20.6 M3.2 15.2 H13"/></g>
<circle cx="17.2" cy="17" r="6" fill="#fff"/><circle cx="17.2" cy="17" r="4.8" fill="#1a9ed9"/><path d="M15.8 14.6 L19.6 17 L15.8 19.4 Z" fill="#cfeaf8"/></svg>
<div class="btn obtn" style="left:175px;top:503px;width:37px;height:37px"></div>
<svg class="abs" style="left:190px;top:510px" width="8" height="24" viewBox="0 0 8 24"><circle cx="4" cy="5.1" r="2.3" fill="#1a9ed9"/><circle cx="4" cy="12.8" r="2.3" fill="#1a9ed9"/><circle cx="4" cy="20.5" r="2.3" fill="#1a9ed9"/></svg>
<div class="chip" style="left:222px;width:58px;background:#185d9a"><span class="w">VOICE</span></div>
<div class="chip" style="left:290px;width:54px;background:#6dd0f8"><span class="k">CHAT</span></div>
<div class="chip" style="left:354px;width:64px;background:#4aa3e8"><span class="w">E-MAIL</span></div>
<div class="chip" style="left:428px;width:63px;background:#ffcc00"><span class="k">LUNCH</span></div>
<div class="chip" style="left:501px;width:62px;background:#a03d8c"><span class="w">BREAK</span></div>
<div class="chip" style="left:573px;width:80px;background:#ff7b00"><span class="w">VACATION</span></div>
<div class="chip" style="left:663px;width:51px;background:#cfc6a8"><span class="k">SICK</span></div>
<div class="chip" style="left:724px;width:95px;background:#0a8a32"><span class="w">TRAINING</span><svg width="13" height="13" viewBox="-0.5 -0.5 13 13" style="margin-left:6px;margin-top:-2px"><path d="M3.6 -1.2 H8.4 V0.5 H7.5 L7.9 5.2 L9.9 7 V8.3 H6.7 L6 13.8 L5.3 8.3 H2.1 V7 L4.1 5.2 L4.5 0.5 H3.6 Z" transform="rotate(45 6 6.3)" fill="#fff" stroke="#000" stroke-width="1.1" stroke-linejoin="round"/></svg></div>
<div class="chip" style="left:829px;width:91px;background:#4cae0a"><span class="w">MEETING</span><svg width="13" height="13" viewBox="-0.5 -0.5 13 13" style="margin-left:6px;margin-top:-2px"><path d="M3.6 -1.2 H8.4 V0.5 H7.5 L7.9 5.2 L9.9 7 V8.3 H6.7 L6 13.8 L5.3 8.3 H2.1 V7 L4.1 5.2 L4.5 0.5 H3.6 Z" transform="rotate(45 6 6.3)" fill="#fff" stroke="#000" stroke-width="1.1" stroke-linejoin="round"/></svg></div>
<div class="chip" style="left:930px;width:111px;background:#99e600"><span class="w">ONE ON ONE</span><svg width="13" height="13" viewBox="-0.5 -0.5 13 13" style="margin-left:6px;margin-top:-2px"><path d="M3.6 -1.2 H8.4 V0.5 H7.5 L7.9 5.2 L9.9 7 V8.3 H6.7 L6 13.8 L5.3 8.3 H2.1 V7 L4.1 5.2 L4.5 0.5 H3.6 Z" transform="rotate(45 6 6.3)" fill="#fff" stroke="#000" stroke-width="1.1" stroke-linejoin="round"/></svg></div>
<div class="chip" style="left:1051px;width:73px;background:#ff9f4a"><span class="k">HOLIDAY</span></div>
<div class="chip" style="left:1134px;width:79px;background:#b0644e"><span class="w">TASK 1</span><svg width="13" height="13" viewBox="-0.5 -0.5 13 13" style="margin-left:6px;margin-top:-2px"><path d="M3.6 -1.2 H8.4 V0.5 H7.5 L7.9 5.2 L9.9 7 V8.3 H6.7 L6 13.8 L5.3 8.3 H2.1 V7 L4.1 5.2 L4.5 0.5 H3.6 Z" transform="rotate(45 6 6.3)" fill="#fff" stroke="#000" stroke-width="1.1" stroke-linejoin="round"/></svg></div>
<div class="chip" style="left:1223px;width:80px;background:#c49a8f"><span class="k">TASK 2</span><svg width="13" height="13" viewBox="-0.5 -0.5 13 13" style="margin-left:6px;margin-top:-2px"><path d="M3.6 -1.2 H8.4 V0.5 H7.5 L7.9 5.2 L9.9 7 V8.3 H6.7 L6 13.8 L5.3 8.3 H2.1 V7 L4.1 5.2 L4.5 0.5 H3.6 Z" transform="rotate(45 6 6.3)" fill="#000" stroke="#fff" stroke-width="1.1" stroke-linejoin="round"/></svg></div>
<div class="chip" style="left:1313px;width:80px;background:#e8b4a8"><span class="k">TASK 3</span><svg width="13" height="13" viewBox="-0.5 -0.5 13 13" style="margin-left:6px;margin-top:-2px"><path d="M3.6 -1.2 H8.4 V0.5 H7.5 L7.9 5.2 L9.9 7 V8.3 H6.7 L6 13.8 L5.3 8.3 H2.1 V7 L4.1 5.2 L4.5 0.5 H3.6 Z" transform="rotate(45 6 6.3)" fill="#000" stroke="#fff" stroke-width="1.1" stroke-linejoin="round"/></svg></div>
<div class="abs" style="left:12px;top:554px;font-size:13px;line-height:20px;color:#555;white-space:nowrap">America/Chicago</div>
<div class="abs" style="left:12px;top:574px;font-size:13px;line-height:20px;color:#444;font-weight:bold;white-space:nowrap;letter-spacing:-0.45px">UTC -5 hours</div>
<div class="abs" style="left:222px;top:556px;width:1435px;height:100px;background:#fff;border:1px solid #d5def0;border-right:1px solid #d5def0"></div>
<div class="abs" style="left:223px;top:609px;width:1433px;height:46px;background:#f6f7f9;border-top:1px solid #d5def0"></div>
<div class="abs" style="left:223px;top:557px;width:1433px;height:98px;overflow:hidden">
<div class="abs" style="left:0px;top:0;width:140px;height:52px;border-right:1px solid #d5def0;font-size:15px;color:#333;padding-left:10px;line-height:52px;white-space:nowrap">06:00 AM</div>
<div class="abs" style="left:0px;top:52px;width:35px;height:46px;border-right:1px solid #dde3ea;font-size:12px;color:#333;text-align:center;line-height:48px;border-right-color:#d5def0">:00</div>
<div class="abs" style="left:35px;top:52px;width:35px;height:46px;border-right:1px solid #dde3ea;font-size:12px;color:#333;text-align:center;line-height:48px;border-right-color:#d5def0">:15</div>
<div class="abs" style="left:70px;top:52px;width:35px;height:46px;border-right:1px solid #dde3ea;font-size:12px;color:#333;text-align:center;line-height:48px;border-right-color:#d5def0">:30</div>
<div class="abs" style="left:105px;top:52px;width:35px;height:46px;border-right:1px solid #dde3ea;font-size:12px;color:#333;text-align:center;line-height:48px;border-right-color:#d5def0">:45</div>
<div class="abs" style="left:140px;top:0;width:140px;height:52px;border-right:1px solid #d5def0;font-size:15px;color:#333;padding-left:10px;line-height:52px;white-space:nowrap">07:00 AM</div>
<div class="abs" style="left:140px;top:52px;width:35px;height:46px;border-right:1px solid #dde3ea;font-size:12px;color:#333;text-align:center;line-height:48px;border-right-color:#d5def0">:00</div>
<div class="abs" style="left:175px;top:52px;width:35px;height:46px;border-right:1px solid #dde3ea;font-size:12px;color:#333;text-align:center;line-height:48px;border-right-color:#d5def0">:15</div>
<div class="abs" style="left:210px;top:52px;width:35px;height:46px;border-right:1px solid #dde3ea;font-size:12px;color:#333;text-align:center;line-height:48px;border-right-color:#d5def0">:30</div>
<div class="abs" style="left:245px;top:52px;width:35px;height:46px;border-right:1px solid #dde3ea;font-size:12px;color:#333;text-align:center;line-height:48px;border-right-color:#d5def0">:45</div>
<div class="abs" style="left:280px;top:0;width:140px;height:52px;border-right:1px solid #d5def0;font-size:15px;color:#333;padding-left:10px;line-height:52px;white-space:nowrap">08:00 AM</div>
<div class="abs" style="left:280px;top:52px;width:35px;height:46px;border-right:1px solid #dde3ea;font-size:12px;color:#333;text-align:center;line-height:48px;border-right-color:#d5def0">:00</div>
<div class="abs" style="left:315px;top:52px;width:35px;height:46px;border-right:1px solid #dde3ea;font-size:12px;color:#333;text-align:center;line-height:48px;border-right-color:#d5def0">:15</div>
<div class="abs" style="left:350px;top:52px;width:35px;height:46px;border-right:1px solid #dde3ea;font-size:12px;color:#333;text-align:center;line-height:48px;border-right-color:#d5def0">:30</div>
<div class="abs" style="left:385px;top:52px;width:35px;height:46px;border-right:1px solid #dde3ea;font-size:12px;color:#333;text-align:center;line-height:48px;border-right-color:#d5def0">:45</div>
<div class="abs" style="left:420px;top:0;width:140px;height:52px;border-right:1px solid #d5def0;font-size:15px;color:#333;padding-left:10px;line-height:52px;white-space:nowrap">09:00 AM</div>
<div class="abs" style="left:420px;top:52px;width:35px;height:46px;border-right:1px solid #dde3ea;font-size:12px;color:#333;text-align:center;line-height:48px;border-right-color:#d5def0">:00</div>
<div class="abs" style="left:455px;top:52px;width:35px;height:46px;border-right:1px solid #dde3ea;font-size:12px;color:#333;text-align:center;line-height:48px;border-right-color:#d5def0">:15</div>
<div class="abs" style="left:490px;top:52px;width:35px;height:46px;border-right:1px solid #dde3ea;font-size:12px;color:#333;text-align:center;line-height:48px;border-right-color:#d5def0">:30</div>
<div class="abs" style="left:525px;top:52px;width:35px;height:46px;border-right:1px solid #dde3ea;font-size:12px;color:#333;text-align:center;line-height:48px;border-right-color:#d5def0">:45</div>
<div class="abs" style="left:560px;top:0;width:140px;height:52px;border-right:1px solid #d5def0;font-size:15px;color:#333;padding-left:10px;line-height:52px;white-space:nowrap">10:00 AM</div>
<div class="abs" style="left:560px;top:52px;width:35px;height:46px;border-right:1px solid #dde3ea;font-size:12px;color:#333;text-align:center;line-height:48px;border-right-color:#d5def0">:00</div>
<div class="abs" style="left:595px;top:52px;width:35px;height:46px;border-right:1px solid #dde3ea;font-size:12px;color:#333;text-align:center;line-height:48px;border-right-color:#d5def0">:15</div>
<div class="abs" style="left:630px;top:52px;width:35px;height:46px;border-right:1px solid #dde3ea;font-size:12px;color:#333;text-align:center;line-height:48px;border-right-color:#d5def0">:30</div>
<div class="abs" style="left:665px;top:52px;width:35px;height:46px;border-right:1px solid #dde3ea;font-size:12px;color:#333;text-align:center;line-height:48px;border-right-color:#d5def0">:45</div>
<div class="abs" style="left:700px;top:0;width:140px;height:52px;border-right:1px solid #d5def0;font-size:15px;color:#333;padding-left:10px;line-height:52px;white-space:nowrap">11:00 AM</div>
<div class="abs" style="left:700px;top:52px;width:35px;height:46px;border-right:1px solid #dde3ea;font-size:12px;color:#333;text-align:center;line-height:48px;border-right-color:#d5def0">:00</div>
<div class="abs" style="left:735px;top:52px;width:35px;height:46px;border-right:1px solid #dde3ea;font-size:12px;color:#333;text-align:center;line-height:48px;border-right-color:#d5def0">:15</div>
<div class="abs" style="left:770px;top:52px;width:35px;height:46px;border-right:1px solid #dde3ea;font-size:12px;color:#333;text-align:center;line-height:48px;border-right-color:#d5def0">:30</div>
<div class="abs" style="left:805px;top:52px;width:35px;height:46px;border-right:1px solid #dde3ea;font-size:12px;color:#333;text-align:center;line-height:48px;border-right-color:#d5def0">:45</div>
<div class="abs" style="left:840px;top:0;width:140px;height:52px;border-right:1px solid #d5def0;font-size:15px;color:#333;padding-left:10px;line-height:52px;white-space:nowrap">12:00 PM</div>
<div class="abs" style="left:840px;top:52px;width:35px;height:46px;border-right:1px solid #dde3ea;font-size:12px;color:#333;text-align:center;line-height:48px;border-right-color:#d5def0">:00</div>
<div class="abs" style="left:875px;top:52px;width:35px;height:46px;border-right:1px solid #dde3ea;font-size:12px;color:#333;text-align:center;line-height:48px;border-right-color:#d5def0">:15</div>
<div class="abs" style="left:910px;top:52px;width:35px;height:46px;border-right:1px solid #dde3ea;font-size:12px;color:#333;text-align:center;line-height:48px;border-right-color:#d5def0">:30</div>
<div class="abs" style="left:945px;top:52px;width:35px;height:46px;border-right:1px solid #dde3ea;font-size:12px;color:#333;text-align:center;line-height:48px;border-right-color:#d5def0">:45</div>
<div class="abs" style="left:980px;top:0;width:140px;height:52px;border-right:1px solid #d5def0;font-size:15px;color:#333;padding-left:10px;line-height:52px;white-space:nowrap">01:00 PM</div>
<div class="abs" style="left:980px;top:52px;width:35px;height:46px;border-right:1px solid #dde3ea;font-size:12px;color:#333;text-align:center;line-height:48px;border-right-color:#d5def0">:00</div>
<div class="abs" style="left:1015px;top:52px;width:35px;height:46px;border-right:1px solid #dde3ea;font-size:12px;color:#333;text-align:center;line-height:48px;border-right-color:#d5def0">:15</div>
<div class="abs" style="left:1050px;top:52px;width:35px;height:46px;border-right:1px solid #dde3ea;font-size:12px;color:#333;text-align:center;line-height:48px;border-right-color:#d5def0">:30</div>
<div class="abs" style="left:1085px;top:52px;width:35px;height:46px;border-right:1px solid #dde3ea;font-size:12px;color:#333;text-align:center;line-height:48px;border-right-color:#d5def0">:45</div>
<div class="abs" style="left:1120px;top:0;width:140px;height:52px;border-right:1px solid #d5def0;font-size:15px;color:#333;padding-left:10px;line-height:52px;white-space:nowrap">02:00 PM</div>
<div class="abs" style="left:1120px;top:52px;width:35px;height:46px;border-right:1px solid #dde3ea;font-size:12px;color:#333;text-align:center;line-height:48px;border-right-color:#d5def0">:00</div>
<div class="abs" style="left:1155px;top:52px;width:35px;height:46px;border-right:1px solid #dde3ea;font-size:12px;color:#333;text-align:center;line-height:48px;border-right-color:#d5def0">:15</div>
<div class="abs" style="left:1190px;top:52px;width:35px;height:46px;border-right:1px solid #dde3ea;font-size:12px;color:#333;text-align:center;line-height:48px;border-right-color:#d5def0">:30</div>
<div class="abs" style="left:1225px;top:52px;width:35px;height:46px;border-right:1px solid #dde3ea;font-size:12px;color:#333;text-align:center;line-height:48px;border-right-color:#d5def0">:45</div>
<div class="abs" style="left:1260px;top:0;width:140px;height:52px;border-right:1px solid #d5def0;font-size:15px;color:#333;padding-left:10px;line-height:52px;white-space:nowrap">03:00 PM</div>
<div class="abs" style="left:1260px;top:52px;width:35px;height:46px;border-right:1px solid #dde3ea;font-size:12px;color:#333;text-align:center;line-height:48px;border-right-color:#d5def0">:00</div>
<div class="abs" style="left:1295px;top:52px;width:35px;height:46px;border-right:1px solid #dde3ea;font-size:12px;color:#333;text-align:center;line-height:48px;border-right-color:#d5def0">:15</div>
<div class="abs" style="left:1330px;top:52px;width:35px;height:46px;border-right:1px solid #dde3ea;font-size:12px;color:#333;text-align:center;line-height:48px;border-right-color:#d5def0">:30</div>
<div class="abs" style="left:1365px;top:52px;width:35px;height:46px;border-right:1px solid #dde3ea;font-size:12px;color:#333;text-align:center;line-height:48px;border-right-color:#d5def0">:45</div>
<div class="abs" style="left:1400px;top:0;width:140px;height:52px;border-right:1px solid #d5def0;font-size:15px;color:#333;padding-left:10px;line-height:52px;white-space:nowrap">04:00 PM</div>
<div class="abs" style="left:1400px;top:52px;width:35px;height:46px;border-right:1px solid #dde3ea;font-size:12px;color:#333;text-align:center;line-height:48px;border-right-color:#d5def0">:00</div>
<div class="abs" style="left:1435px;top:52px;width:35px;height:46px;border-right:1px solid #dde3ea;font-size:12px;color:#333;text-align:center;line-height:48px;border-right-color:#d5def0">:15</div>
<div class="abs" style="left:1470px;top:52px;width:35px;height:46px;border-right:1px solid #dde3ea;font-size:12px;color:#333;text-align:center;line-height:48px;border-right-color:#d5def0">:30</div>
<div class="abs" style="left:1505px;top:52px;width:35px;height:46px;border-right:1px solid #dde3ea;font-size:12px;color:#333;text-align:center;line-height:48px;border-right-color:#d5def0">:45</div>
</div>
<div class="abs" style="left:12px;top:655px;width:1645px;height:177px;background:#fff;border:1px solid #d5def0;border-bottom:1px solid #d5def0"></div>
<div class="abs" style="left:222px;top:655px;width:1px;height:177px;background:#d5def0"></div>
<svg class="abs" style="left:23px;top:668px" width="14" height="14" viewBox="0 0 14 14"><circle cx="7" cy="7" r="7" fill="#1a9ed9"/><text x="7" y="11.2" font-size="11" font-weight="bold" fill="#fff" text-anchor="middle" font-family="Liberation Sans">?</text></svg>
<div class="abs" style="left:47px;top:668px;font-size:13px;line-height:16px;color:#333;white-space:nowrap">Andy Brown</div>
<div class="abs" style="left:24px;top:685px;width:11px;height:11px;border-radius:50%;background:#2a9ad6"></div>
<div class="abs" style="left:38px;top:685px;width:11px;height:11px;border-radius:50%;background:#eba07c"></div>
<svg class="abs" style="left:198px;top:669px" width="12" height="12" viewBox="0 0 12 12"><circle cx="6" cy="3.6" r="3" fill="#12a0de"/><path d="M0.6 12 V9.8 Q0.6 7 3.5 7 H8.5 Q11.4 7 11.4 9.8 V12 Z" fill="#12a0de"/></svg>
<div class="act" style="left:364px;top:659px;width:279px;height:36px;background:#185d9a"><span class="w">VOICE</span></div>
<div class="act" style="left:644px;top:659px;width:34px;height:36px;background:#a03d8c"><span class="w">BR</span></div>
<div class="act" style="left:679px;top:659px;width:279px;height:36px;background:#185d9a"><span class="w">VOICE</span></div>
<div class="act" style="left:959px;top:659px;width:69px;height:36px;background:#ffcc00"><span class="k">LUNCH</span></div>
<div class="act" style="left:1029px;top:659px;width:279px;height:36px;background:#185d9a"><span class="w">VOICE</span></div>
<div class="abs" style="left:13px;top:700px;width:209px;height:1px;background:#d5def0"></div>
<div class="abs" style="left:223px;top:700px;width:1433px;height:1px;background:#e8ebee"></div>
<svg class="abs" style="left:23px;top:713px" width="14" height="14" viewBox="0 0 14 14"><circle cx="7" cy="7" r="7" fill="#1a9ed9"/><text x="7" y="11.2" font-size="11" font-weight="bold" fill="#fff" text-anchor="middle" font-family="Liberation Sans">?</text></svg>
<div class="abs" style="left:47px;top:713px;font-size:13px;line-height:16px;color:#333;white-space:nowrap">Emily Moore</div>
<div class="abs" style="left:24px;top:729px;width:11px;height:11px;border-radius:50%;background:#2a9ad6"></div>
<div class="abs" style="left:38px;top:729px;width:11px;height:11px;border-radius:50%;background:#eba07c"></div>
<svg class="abs" style="left:198px;top:714px" width="12" height="12" viewBox="0 0 12 12"><circle cx="6" cy="3.6" r="3" fill="#12a0de"/><path d="M0.6 12 V9.8 Q0.6 7 3.5 7 H8.5 Q11.4 7 11.4 9.8 V12 Z" fill="#12a0de"/></svg>
<div class="act" style="left:364px;top:704px;width:279px;height:36px;background:#185d9a"><span class="w">VOICE</span></div>
<div class="act" style="left:644px;top:704px;width:34px;height:36px;background:#a03d8c"><span class="w">BR</span></div>
<div class="act" style="left:679px;top:704px;width:279px;height:36px;background:#185d9a"><span class="w">VOICE</span></div>
<div class="act" style="left:959px;top:704px;width:69px;height:36px;background:#ffcc00"><span class="k">LUNCH</span></div>
<div class="act" style="left:1029px;top:704px;width:279px;height:36px;background:#185d9a"><span class="w">VOICE</span></div>
<div class="abs" style="left:13px;top:744px;width:209px;height:1px;background:#d5def0"></div>
<div class="abs" style="left:223px;top:744px;width:1433px;height:1px;background:#e8ebee"></div>
<svg class="abs" style="left:23px;top:757px" width="14" height="14" viewBox="0 0 14 14"><circle cx="7" cy="7" r="7" fill="#1a9ed9"/><text x="7" y="11.2" font-size="11" font-weight="bold" fill="#fff" text-anchor="middle" font-family="Liberation Sans">?</text></svg>
<div class="abs" style="left:47px;top:757px;font-size:13px;line-height:16px;color:#333;white-space:nowrap">Ethan Jones</div>
<div class="abs" style="left:24px;top:773px;width:11px;height:11px;border-radius:50%;background:#2a9ad6"></div>
<svg class="abs" style="left:198px;top:758px" width="12" height="12" viewBox="0 0 12 12"><circle cx="6" cy="3.6" r="3" fill="#12a0de"/><path d="M0.6 12 V9.8 Q0.6 7 3.5 7 H8.5 Q11.4 7 11.4 9.8 V12 Z" fill="#12a0de"/></svg>
<div class="act" style="left:364px;top:748px;width:279px;height:36px;background:#185d9a"><span class="w">VOICE</span></div>
<div class="act" style="left:644px;top:748px;width:34px;height:36px;background:#a03d8c"><span class="w">BR</span></div>
<div class="act" style="left:679px;top:748px;width:279px;height:36px;background:#185d9a"><span class="w">VOICE</span></div>
<div class="act" style="left:959px;top:748px;width:69px;height:36px;background:#ffcc00"><span class="k">LUNCH</span></div>
<div class="act" style="left:1029px;top:748px;width:279px;height:36px;background:#185d9a"><span class="w">VOICE</span></div>
<div class="abs" style="left:13px;top:788px;width:209px;height:1px;background:#d5def0"></div>
<div class="abs" style="left:223px;top:788px;width:1433px;height:1px;background:#e8ebee"></div>
<svg class="abs" style="left:23px;top:801px" width="14" height="14" viewBox="0 0 14 14"><circle cx="7" cy="7" r="7" fill="#1a9ed9"/><text x="7" y="11.2" font-size="11" font-weight="bold" fill="#fff" text-anchor="middle" font-family="Liberation Sans">?</text></svg>
<div class="abs" style="left:47px;top:801px;font-size:13px;line-height:16px;color:#333;white-space:nowrap">Harry Williams</div>
<div class="abs" style="left:24px;top:817px;width:11px;height:11px;border-radius:50%;background:#2a9ad6"></div>
<div class="abs" style="left:38px;top:817px;width:11px;height:11px;border-radius:50%;background:#eba07c"></div>
<svg class="abs" style="left:198px;top:802px" width="12" height="12" viewBox="0 0 12 12"><circle cx="6" cy="3.6" r="3" fill="#12a0de"/><path d="M0.6 12 V9.8 Q0.6 7 3.5 7 H8.5 Q11.4 7 11.4 9.8 V12 Z" fill="#12a0de"/></svg>
<div class="act" style="left:364px;top:792px;width:279px;height:36px;background:#185d9a"><span class="w">VOICE</span></div>
<div class="act" style="left:644px;top:792px;width:34px;height:36px;background:#a03d8c"><span class="w">BR</span></div>
<div class="act" style="left:679px;top:792px;width:279px;height:36px;background:#185d9a"><span class="w">VOICE</span></div>
<div class="act" style="left:959px;top:792px;width:69px;height:36px;background:#ffcc00"><span class="k">LUNCH</span></div>
<div class="act" style="left:1029px;top:792px;width:279px;height:36px;background:#185d9a"><span class="w">VOICE</span></div>
<div class="abs" style="left:222px;top:832px;width:1435px;height:15px;background:#e4e8eb;border:1px solid #d5def0;border-top:none"></div>
<div class="abs" style="left:581px;top:832px;width:611px;height:14px;background:#cfd3d7;border-radius:7px"></div>
</body></html>
